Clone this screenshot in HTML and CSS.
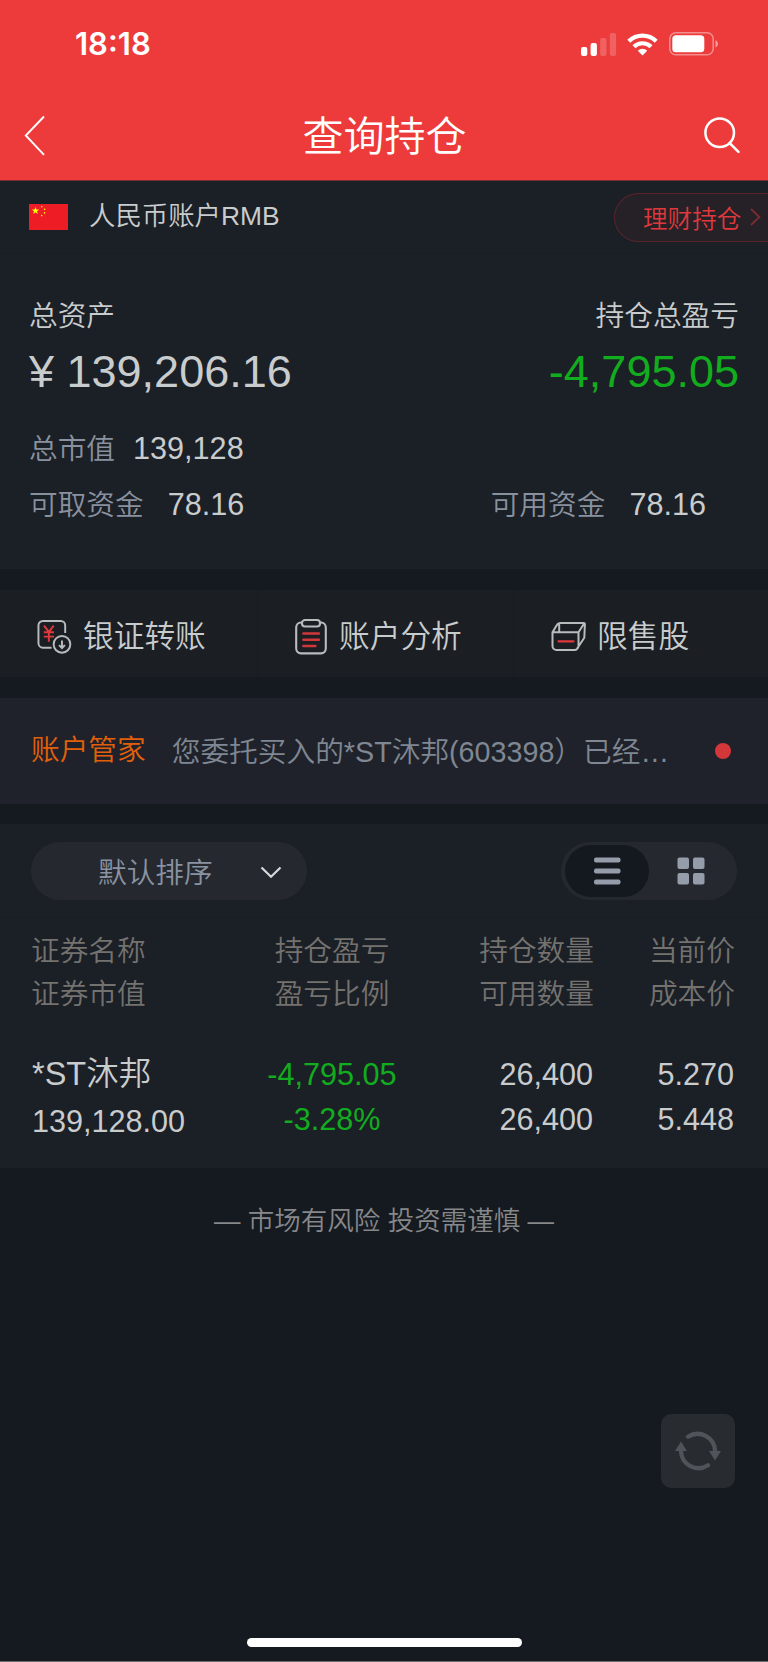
FILE: index.html
```html
<!DOCTYPE html>
<html lang="zh-CN">
<head>
  <meta charset="UTF-8">
  <title>查询持仓</title>
  <link rel="stylesheet" href="styles.css">
</head>
<body>

<header class="header">
  <div class="status-bar">
    <span class="time">18:18</span>
    <div class="status-icons">
      <svg class="signal" width="36" height="23" viewBox="0 0 36 23" fill="#fff">
        <rect x="0" y="14" width="6.3" height="9" rx="2"/>
        <rect x="9.6" y="10" width="6.3" height="13" rx="2"/>
        <rect x="19.2" y="5" width="6.3" height="18" rx="2" opacity=".2"/>
        <rect x="28.8" y="0" width="6.3" height="23" rx="2" opacity=".2"/>
      </svg>
      <svg class="wifi" width="31" height="23" viewBox="0 0 31 23" fill="none" stroke="#fff" stroke-width="4.2">
        <path d="M1.8 8.3a19.5 19.5 0 0 1 27.4 0"/>
        <path d="M7 13.8a12 12 0 0 1 17 0"/>
        <path d="M15.5 22.6l-4.7-4.8a6.7 6.7 0 0 1 9.4 0z" fill="#fff" stroke="none"/>
      </svg>
      <svg class="battery" width="50" height="24" viewBox="0 0 50 24">
        <rect x=".8" y=".8" width="43.4" height="22" rx="6" fill="none" stroke="#fff" stroke-opacity=".42" stroke-width="1.5"/>
        <rect x="3.3" y="3.3" width="32" height="17" rx="3.6" fill="#fff"/>
        <path d="M46.5 8.3c3.2 1.1 3.2 6 0 7.2z" fill="#fff" opacity=".5"/>
      </svg>
    </div>
  </div>
  <div class="nav">
    <svg width="38" height="42" viewBox="0 0 38 42" fill="none" stroke="#fff" stroke-width="1.9">
      <path d="M20 1.5L1.8 20.5L20 39.8"/>
    </svg>
    <h1>查询持仓</h1>
    <svg class="search" width="38" height="38" viewBox="0 0 38 38" fill="none" stroke="#fff" stroke-width="2.5" stroke-linecap="round">
      <circle cx="16.7" cy="16.8" r="14.3"/>
      <path d="M26.5 27l9 8.8"/>
    </svg>
  </div>
</header>

<section class="account">
  <svg class="flag" width="39" height="26" viewBox="0 0 39 26">
    <rect width="39" height="26" fill="#ee1c25"/>
    <g fill="#ff0">
      <path d="M6.5 3l.9 2.6h2.8L8 7.2l.8 2.7-2.3-1.6-2.3 1.6L5 7.2 2.8 5.6h2.8z"/>
      <circle cx="12.8" cy="2.8" r=".8"/>
      <circle cx="15.6" cy="5.3" r=".8"/>
      <circle cx="15.6" cy="8.9" r=".8"/>
      <circle cx="12.8" cy="11.6" r=".8"/>
    </g>
  </svg>
  <span class="account-name">人民币账户RMB</span>
  <a class="wealth">理财持仓
    <svg width="11" height="18" viewBox="0 0 11 18" fill="none" stroke="#792d31" stroke-width="1.8">
      <path d="M1 1l8.4 8L1 17"/>
    </svg>
  </a>
</section>

<section class="assets">
  <div class="row titles"><span>总资产</span><span>持仓总盈亏</span></div>
  <div class="row totals"><span>¥ 139,206.16</span><span class="green">-4,795.05</span></div>
  <div class="row detail">
    <div><label>总市值</label><span class="value market">139,128</span></div>
  </div>
  <div class="row detail">
    <div><label>可取资金</label><span class="value">78.16</span></div>
    <div class="usable"><label>可用资金</label><span class="value">78.16</span></div>
  </div>
</section>

<section class="actions">
  <a class="action">
    <svg width="35" height="36" viewBox="0 0 36 36" fill="none" stroke="#b9bcbd" stroke-width="2">
      <path d="M15 29H6a4.500 4.500 0 0 1-4.500-4.500V6A4.500 4.500 0 0 1 6 1.500h18.500A4.500 4.500 0 0 1 29 6v8"/>
      <circle cx="25.700" cy="25.500" r="8.600"/>
      <path d="M25.700 21.500v7.500M22.700 26.400l3 3 3-3"/>
      <path d="M7.200 6.400l5 6.300 5-6.300M7 13.200h10.500M7 17.600h10.500M12.200 12.700V23" stroke="#e0383b" stroke-width="2"/>
    </svg>
    银证转账
  </a>
  <a class="action">
    <svg width="32" height="36" viewBox="0 0 32 36" fill="none" stroke="#b9bcbd" stroke-width="2.100">
      <path d="M7 3.500H6A5 5 0 0 0 1.200 8.500v21A5 5 0 0 0 6 34.400h20a5 5 0 0 0 4.800-4.900v-21A5 5 0 0 0 26 3.500h-1"/>
      <rect x="7" y="1" width="18" height="6.500" rx="3"/>
      <path d="M8.400 14.400h15.500M8.400 20.700h15.500M8.400 26.900h12" stroke="#d0373a" stroke-width="2.500" stroke-linecap="round"/>
    </svg>
    账户分析
  </a>
  <a class="action">
    <svg width="35" height="29" viewBox="0 0 35 29" fill="none" stroke="#b9bcbd" stroke-width="2" stroke-linejoin="round">
      <path d="M1.500 10.300h26v13.500a4.200 4.200 0 0 1-4.200 4.200H5.500a4 4 0 0 1-4-4V10.300L5.700 3.200A4 4 0 0 1 9.200 1h23.500q1.300 0 1.200 1.500l-.6 13.300-7.300 11M27.500 10.300L33.300 1.300M8.200 1.200v9"/>
      <path d="M7.500 19.300h15" stroke="#e0383b" stroke-width="2.200" stroke-linecap="round"/>
    </svg>
    限售股
  </a>
</section>

<section class="notice">
  <strong>账户管家</strong>
  <p>您委托买入的*ST沐邦(603398）已经…</p>
  <i class="dot"></i>
</section>

<section class="toolbar">
  <div class="sort">
    <span>默认排序</span>
    <svg width="22" height="13" viewBox="0 0 22 13" fill="none" stroke="#d6d8d9" stroke-width="2.200">
      <path d="M1.500 1.500L11 10.800L20.500 1.500"/>
    </svg>
  </div>
  <div class="switch">
    <div class="switch-item active">
      <svg width="28" height="28" viewBox="0 0 28 28" fill="#959caa">
        <rect x="1" y=".5" width="26.500" height="5" rx="2"/>
        <rect x="1" y="11.500" width="26.500" height="5" rx="2"/>
        <rect x="1" y="22.500" width="26.500" height="5" rx="2"/>
      </svg>
    </div>
    <div class="switch-item">
      <svg width="28" height="28" viewBox="0 0 28 28" fill="#959caa">
        <rect x=".5" y=".5" width="11.500" height="11.500" rx="2"/>
        <rect x="16" y=".5" width="11.500" height="11.500" rx="2"/>
        <rect x=".5" y="16" width="11.500" height="11.500" rx="2"/>
        <rect x="16" y="16" width="11.500" height="11.500" rx="2"/>
      </svg>
    </div>
  </div>
</section>

<section class="holdings">
  <div class="grid head">
    <div>证券名称<br>证券市值</div>
    <div>持仓盈亏<br>盈亏比例</div>
    <div>持仓数量<br>可用数量</div>
    <div>当前价<br>成本价</div>
  </div>
  <div class="grid stock">
    <div><span class="stock-name">*ST沐邦</span>139,128.00</div>
    <div class="green">-4,795.05<br>-3.28%</div>
    <div>26,400<br>26,400</div>
    <div>5.270<br>5.448</div>
  </div>
</section>

<p class="risk">— 市场有风险 投资需谨慎 —</p>

<div class="refresh">
  <svg width="46" height="40" viewBox="0 0 46 40" fill="none" stroke="#505359" stroke-width="4.300" stroke-linecap="round">
    <path d="M13 5.700A17.500 17.500 0 0 1 40 20v1"/>
    <path d="M33 34.300A17.500 17.500 0 0 1 6 20v-1"/>
    <path d="M34 20h12l-6 9.500zM0 20h12L6 10.500z" fill="#505359" stroke="none"/>
  </svg>
</div>
<div class="home-bar"></div>

</body>
</html>
```
FILE: styles.css
```css
* {
  box-sizing: border-box;
}

body {
  margin: 0;
  position: relative;
  width: 768px;
  height: 1662px;
  overflow: hidden;
  background: #151920;
  border-bottom: 1px solid #6c6e72;
  color: #c9cccd;
  font-family: "Liberation Sans", "Noto Sans CJK SC", sans-serif;
  font-weight: 350;
  font-size: 28.7px;
}

h1, p {
  margin: 0;
  font-weight: 350;
}

svg {
  display: block;
  flex: none;
}

.green {
  color: #12ad1e;
}

/* header */
.header {
  height: 181px;
  background: #ed3b3b;
  border-bottom: 1px solid #7b2c30;
  color: #fff;
}

.status-bar {
  display: flex;
  justify-content: space-between;
  height: 88px;
  padding: 0 49px 0 75px;
  align-items: center;
}

.time {
  margin-bottom: 1px;
  font-family: Inter, sans-serif;
  font-weight: 600;
  font-size: 31px;
}

.status-icons {
  display: flex;
  align-items: center;
}

.wifi {
  margin: 0 11px 0 10px;
}

.nav {
  display: flex;
  justify-content: space-between;
  align-items: center;
  height: 92px;
  padding: 4px 27px 0 24px;
}

.nav h1 {
  padding: 1px 0 0 4px;
  font-size: 41px;
  line-height: 60px;
}

.search {
  margin-bottom: 2px;
}

/* account */
.account {
  display: flex;
  align-items: center;
  height: 73px;
  padding-left: 29px;
  background: #1b1f26;
  border-bottom: 1px solid #191c23;
}

.account-name {
  margin: 0 0 7px 21px;
  font-size: 26.400px;
}

.wealth {
  display: flex;
  align-items: center;
  justify-content: space-between;
  width: 154px;
  height: 49px;
  margin-left: auto;
  padding: 0 7px 0 28px;
  background: #262127;
  border: 1.500px solid #592429;
  border-right: none;
  border-radius: 25px 0 0 25px;
  color: #df383a;
  font-size: 24.600px;
}

/* assets */
.assets {
  height: 315px;
  padding: 42px 29px 0;
  background: #1b1f26;
}

.row {
  display: flex;
  justify-content: space-between;
}

.titles {
  line-height: 40px;
}

.totals {
  font-size: 45px;
  line-height: 72px;
  margin-bottom: 13px;
}

.detail {
  line-height: 55px;
}

.detail label {
  color: #89919f;
}

.value {
  margin-left: 24px;
  font-size: 30.600px;
}

.market {
  margin-left: 18px;
}

.usable {
  padding-right: 33px;
}

/* actions */
.actions {
  display: grid;
  grid-template-columns: 258px 256px 1fr;
  height: 87px;
  margin-top: 21px;
  background: #1b1f24;
}

.action {
  display: flex;
  align-items: center;
  gap: 11px;
  padding-left: 37px;
  border-right: 1px solid #181c22;
  font-size: 30.700px;
}

.action svg {
  margin-top: 6px;
}

.action:nth-child(2) {
  gap: 12px;
}

.action:last-child {
  border-right: none;
}

/* notice */
.notice {
  display: flex;
  align-items: center;
  height: 106px;
  margin: 21px 0 20px;
  padding: 0 37px 0 31px;
  background: #1f222a;
}

.notice strong {
  margin-bottom: 7px;
  color: #e2600a;
  font-weight: 350;
}

.notice p {
  flex: 1;
  margin: 0 0 3px 26px;
  color: #7f8793;
  white-space: nowrap;
}

.dot {
  width: 16px;
  height: 16px;
  border-radius: 50%;
  background: #d4373a;
}

/* toolbar */
.toolbar {
  display: flex;
  justify-content: space-between;
  align-items: center;
  height: 94px;
  padding: 0 31px;
  background: #1b1f26;
  border-bottom: 1px solid #191c23;
}

.sort {
  display: flex;
  align-items: center;
  justify-content: space-between;
  width: 276px;
  height: 58px;
  padding: 0 25px 0 67px;
  border-radius: 29px;
  background: #25292f;
  color: #8a92a1;
}

.sort svg {
  margin-top: 3px;
}

.switch {
  display: flex;
  width: 176px;
  height: 58px;
  padding: 3px 4px;
  border-radius: 29px;
  background: #25292f;
}

.switch-item {
  display: flex;
  flex: 1;
  align-items: center;
  justify-content: center;
  border-radius: 26px;
}

.switch-item.active {
  background: #14181f;
}

/* holdings */
.holdings {
  height: 250px;
  padding-top: 12px;
  background: #1b1f26;
}

.grid {
  display: grid;
  grid-template-columns: 200px 200px 161px 141px;
  padding-left: 32px;
}

.grid div {
  text-align: right;
}

.grid div:first-child {
  text-align: left;
}

.grid div:nth-child(2) {
  text-align: center;
}

.head {
  grid-template-columns: 201px 200px 162px 141px;
  margin-left: -1px;
  color: #74726f;
  line-height: 43px;
}

.stock {
  margin-top: 36px;
  font-size: 30.600px;
  line-height: 45px;
}

.stock-name {
  display: block;
  margin: -1px 0 1px;
  font-size: 32.500px;
  line-height: 47px;
}

.risk {
  margin-top: 33px;
  text-align: center;
  font-size: 26.500px;
  line-height: 40px;
  color: #86888a;
}

/* floating */
.refresh {
  position: absolute;
  left: 661px;
  top: 1414px;
  display: flex;
  align-items: center;
  justify-content: center;
  width: 74px;
  height: 74px;
  border-radius: 10px;
  background: #282b2f;
}

.home-bar {
  position: absolute;
  left: 247px;
  bottom: 14px;
  width: 275px;
  height: 9px;
  border-radius: 5px;
  background: #fff;
}
```
